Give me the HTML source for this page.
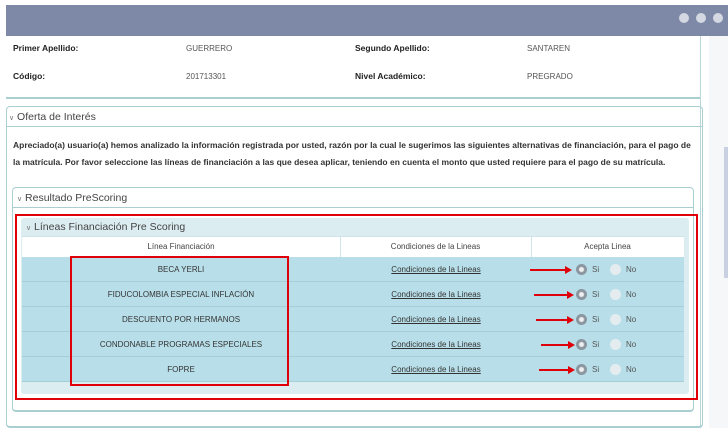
<!DOCTYPE html>
<html><head><meta charset="utf-8"><style>
*{margin:0;padding:0;box-sizing:border-box}
body{width:728px;height:442px;overflow:hidden;background:#fff;font-family:"Liberation Sans",sans-serif;position:relative;color:#333}
.a{position:absolute}
.t{font-size:8.5px;color:#222;white-space:nowrap}
.b{font-weight:bold}
.v{font-size:8px;color:#555}
.hd{font-size:10.5px;color:#444}
.row{position:absolute;left:22px;width:662px;height:25px;background:#b8dfe9;border-bottom:1px solid #a4cfd9}
.c1{position:absolute;left:0;width:318px;text-align:center;top:8px;font-size:8px;color:#333}
.c2{position:absolute;left:318px;width:192px;text-align:center;top:8px;font-size:8px;color:#333;text-decoration:underline}
.r{position:absolute;width:11px;height:11px;border-radius:50%;top:7px}
.on{background:radial-gradient(circle,#eee 2px,#8a96a0 3px);}
.off{background:#e4ecef}
.si{position:absolute;top:8px;font-size:8px;color:#555}
.ar{position:absolute;height:2px;background:#e0000a;top:12px}
.ar:after{content:"";position:absolute;right:-6px;top:-3px;border-left:7px solid #e0000a;border-top:4px solid transparent;border-bottom:4px solid transparent}
</style></head><body>
<div class="a" style="left:6px;top:5px;width:722px;height:31px;background:#7e89a8"></div>
<div class="a" style="left:679px;top:13px;width:10px;height:10px;border-radius:50%;background:#d4d8e2"></div>
<div class="a" style="left:696px;top:13px;width:10px;height:10px;border-radius:50%;background:#d4d8e2"></div>
<div class="a" style="left:713px;top:13px;width:10px;height:10px;border-radius:50%;background:#d4d8e2"></div>
<div class="a" style="left:709px;top:36px;width:19px;height:392px;background:#f6f7f8"></div>
<div class="a" style="left:724px;top:147px;width:4px;height:131px;background:#c9d0e2"></div>
<div class="a" style="left:700px;top:36px;width:1px;height:392px;background:#b9d6d8"></div>
<div class="a" style="left:6px;top:97px;width:694px;height:2px;background:#a9cfd1"></div>
<div class="a t b" style="left:13px;top:43px">Primer Apellido:</div>
<div class="a v" style="left:186px;top:44px">GUERRERO</div>
<div class="a t b" style="left:355px;top:43px">Segundo Apellido:</div>
<div class="a v" style="left:527px;top:44px">SANTAREN</div>
<div class="a t b" style="left:13px;top:71px">Código:</div>
<div class="a v" style="left:186px;top:72px">201713301</div>
<div class="a t b" style="left:355px;top:71px">Nivel Académico:</div>
<div class="a v" style="left:527px;top:72px">PREGRADO</div>
<div class="a" style="left:6px;top:106px;width:697px;height:322px;border:1px solid #a9cfd1;border-radius:4px;border-bottom:2px solid #a9cfd1"></div>
<div class="a" style="left:6px;top:126px;width:697px;height:1px;background:#a9cfd1"></div>
<div class="a hd" style="left:9px;top:111px"><span style="font-size:7px;color:#777">&#8744;</span> Oferta de Interés</div>
<div class="a t b" style="left:13px;top:140px;font-size:8.5px;color:#333">Apreciado(a) usuario(a) hemos analizado la información registrada por usted, razón por la cual le sugerimos las siguientes alternativas de financiación, para el pago de</div>
<div class="a t b" style="left:13px;top:157px;font-size:8.5px;color:#333">la matrícula. Por favor seleccione las líneas de financiación a las que desea aplicar, teniendo en cuenta el monto que usted requiere para el pago de su matrícula.</div>
<div class="a" style="left:12px;top:187px;width:682px;height:225px;border:1px solid #a9cfd1;border-radius:4px;border-bottom:2px solid #a9cfd1"></div>
<div class="a" style="left:12px;top:207px;width:682px;height:1px;background:#a9cfd1"></div>
<div class="a hd" style="left:17px;top:192px"><span style="font-size:7px;color:#777">&#8744;</span> Resultado PreScoring</div>
<div class="a" style="left:21px;top:218px;width:668px;height:176px;background:#dcedf2;border-radius:3px"></div>
<div class="a hd" style="left:26px;top:221px"><span style="font-size:7px;color:#777">&#8744;</span> Líneas Financiación Pre Scoring</div>
<div class="a" style="left:22px;top:236px;width:662px;height:21px;background:#fff;border-top:1px solid #cfe3e8"></div>
<div class="a" style="left:340px;top:236px;width:1px;height:21px;background:#cfe3e8"></div>
<div class="a" style="left:531px;top:236px;width:1px;height:21px;background:#cfe3e8"></div>
<div class="a" style="left:22px;top:242px;width:318px;text-align:center;font-size:8px;color:#444">Línea Financiación</div>
<div class="a" style="left:340px;top:242px;width:191px;text-align:center;font-size:8px;color:#444">Condiciones de la Lineas</div>
<div class="a" style="left:531px;top:242px;width:153px;text-align:center;font-size:8px;color:#444">Acepta Linea</div>
<div class="row" style="top:257px"><div class="c1">BECA YERLI</div><div class="c2">Condiciones de la Lineas</div><div class="ar" style="left:508px;width:36px"></div><div class="r on" style="left:554px"></div><div class="si" style="left:570px">Si</div><div class="r off" style="left:588px"></div><div class="si" style="left:604px">No</div></div>
<div class="row" style="top:282px"><div class="c1">FIDUCOLOMBIA ESPECIAL INFLACIÓN</div><div class="c2">Condiciones de la Lineas</div><div class="ar" style="left:512px;width:34px"></div><div class="r on" style="left:554px"></div><div class="si" style="left:570px">Si</div><div class="r off" style="left:588px"></div><div class="si" style="left:604px">No</div></div>
<div class="row" style="top:307px"><div class="c1">DESCUENTO POR HERMANOS</div><div class="c2">Condiciones de la Lineas</div><div class="ar" style="left:514px;width:32px"></div><div class="r on" style="left:554px"></div><div class="si" style="left:570px">Si</div><div class="r off" style="left:588px"></div><div class="si" style="left:604px">No</div></div>
<div class="row" style="top:332px"><div class="c1">CONDONABLE PROGRAMAS ESPECIALES</div><div class="c2">Condiciones de la Lineas</div><div class="ar" style="left:519px;width:28px"></div><div class="r on" style="left:554px"></div><div class="si" style="left:570px">Si</div><div class="r off" style="left:588px"></div><div class="si" style="left:604px">No</div></div>
<div class="row" style="top:357px"><div class="c1">FOPRE</div><div class="c2">Condiciones de la Lineas</div><div class="ar" style="left:517px;width:30px"></div><div class="r on" style="left:554px"></div><div class="si" style="left:570px">Si</div><div class="r off" style="left:588px"></div><div class="si" style="left:604px">No</div></div>
<div class="a" style="left:15px;top:214px;width:683px;height:186px;border:2px solid #e0000a"></div>
<div class="a" style="left:70px;top:256px;width:219px;height:130px;border:2px solid #e0000a"></div>
</body></html>
